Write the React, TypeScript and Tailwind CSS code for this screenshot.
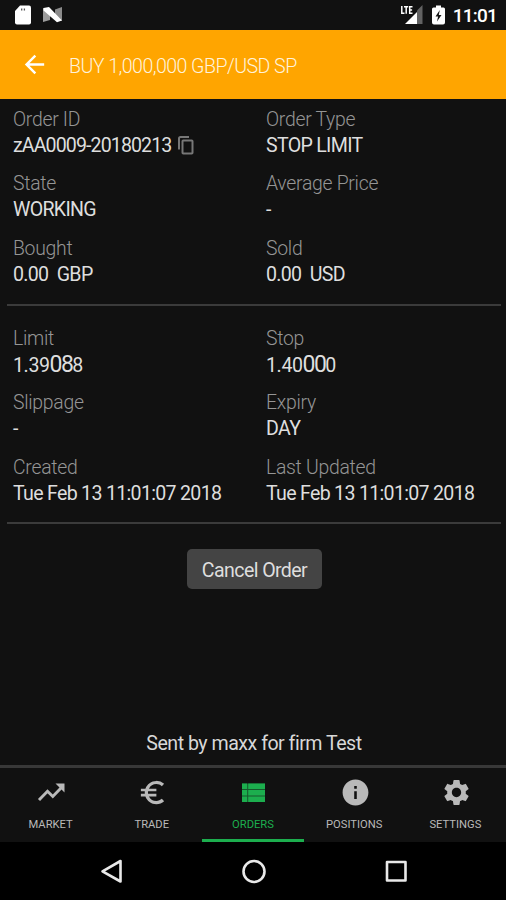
import type { ReactNode } from 'react';
import { MdArrowBack, MdEuroSymbol, MdInfo, MdSettings } from 'react-icons/md';

function TrendIcon({ size }: { size: number }) {
  return (
    <svg width={size} height={size} viewBox="0 0 31 31" fill="none">
      <path d="M3 23l8.500-8.800 5.300 5.300L25.500 10.500" stroke="currentColor" strokeWidth="2.900" />
      <path d="M19.500 6.500H28.500V15.500z" fill="currentColor" />
    </svg>
  );
}

function OrdersIcon({ size }: { size: number }) {
  return (
    <svg width={size} height={size} viewBox="0 0 31 31" fill="currentColor">
      <path d="M4 6.500h23V25H4z" opacity="0.45" />
      <path d="M4 6.500h5.200v5.600H4zM4 13.100h5.200v5.300H4zM4 19.400h5.200V25H4z" />
      <path d="M10.200 6.500H27v5.600H10.200zM10.200 13.100H27v5.300H10.200zM10.200 19.400H27V25H10.200z" />
    </svg>
  );
}

const tabs = [
  { label: 'MARKET', icon: TrendIcon },
  { label: 'TRADE', icon: MdEuroSymbol },
  { label: 'ORDERS', icon: OrdersIcon, active: true },
  { label: 'POSITIONS', icon: MdInfo },
  { label: 'SETTINGS', icon: MdSettings },
];

function StatusBar() {
  return (
    <div className="flex h-[30px] shrink-0 items-center pl-[14px] pr-[9px]">
      <svg width="18" height="20" viewBox="0 0 18 20">
        <path d="M6 .5h9a2 2 0 0 1 2 2v15a2 2 0 0 1-2 2H3a2 2 0 0 1-2-2V6z" fill="#fff" />
        <path d="M7.700 3.500v2M10.400 3.500v2" stroke="#555" strokeWidth="1.300" />
      </svg>
      <svg className="ml-[10px]" width="21" height="18" viewBox="0 0 21 18">
        <path d="M1 2v14l7-2V5z" fill="#9b9b9b" />
        <path d="M20 1v14l-7-4V3.500z" fill="#8b8b8b" />
        <path d="M1.500 2 7 1l13 13.500-5 1.800L1.500 4.500z" fill="#fff" />
      </svg>
      <div className="ml-auto flex items-center">
        <svg width="24" height="20" viewBox="0 0 24 20">
          <path d="M17 5.500 22.500 0v19H17z" fill="#626262" />
          <path d="M17 7v12H5z" fill="#fff" />
          <path
            d="M1.800 1v7.200h2.700M4 1.800h4.200M6.200 1.800v7M12.500 1.800H9.700v6.400h2.800M9.500 5h2.600"
            fill="none"
            stroke="#fff"
            strokeWidth="1.500"
          />
        </svg>
        <svg className="ml-[8px]" width="13" height="20" viewBox="0 0 13 20">
          <path d="M4 .5h5v2h2.500q1.500 0 1.500 1.500v13.500q0 2-2 2H2q-2 0-2-2V4q0-1.500 1.500-1.500H4z" fill="#fff" />
          <path d="M7.800 5 3.500 11.500h2.600L5 16.500l4.500-6.400H6.800z" fill="#151515" />
        </svg>
        <span className="mt-[1px] ml-[8px] text-[19px] leading-none font-medium tracking-[-0.8px] text-white">11:01</span>
      </div>
    </div>
  );
}

function CopyIcon() {
  return (
    <svg className="-mt-[2px] ml-[6px]" width="18" height="20" viewBox="0 0 18 20" fill="none" stroke="#777777" strokeWidth="2">
      <path d="M2 14.500V3.500q0-1.500 1.500-1.500h8.500" />
      <rect x="5.500" y="5.500" width="10" height="13" rx="0.800" />
    </svg>
  );
}

function Field({ label, children }: { label: string; children: ReactNode }) {
  return (
    <div className="h-[64.3px] whitespace-pre">
      <div className="text-[19.4px] leading-[26px] font-light tracking-[-0.28px] text-[#959595]">{label}</div>
      <div className="flex items-center text-[19.6px] leading-[25px] tracking-[-0.7px] text-[#dedede]">{children}</div>
    </div>
  );
}

// digits shown larger than the rest of the price
function Price({ start, pips, end }: { start: string; pips: string; end: string }) {
  return (
    <span className="tracking-[-0.4px]">
      {start}
      <span className="text-[23px] tracking-[-1.6px]">{pips}</span>
      {end}
    </span>
  );
}

export default function App() {
  return (
    <div className="flex h-[900px] w-[506px] flex-col overflow-hidden bg-[#111111] font-['Roboto',sans-serif]">
      <StatusBar />
      <header className="flex h-[69px] shrink-0 items-center bg-[#ffa500] pl-[20px]">
        <MdArrowBack size={29} className="text-white" />
        <h1 className="mt-[4px] ml-[20px] text-[19.6px] font-light tracking-[-0.55px] text-[#fff3dc]">
          BUY 1,000,000 GBP/USD SP
        </h1>
      </header>

      <main className="flex flex-1 flex-col pr-[5px] pl-[7px]">
        <section className="grid h-[205px] grid-cols-[253px_1fr] content-start pt-[8px] pl-[6px]">
          <Field label="Order ID">
            <span className="tracking-[-0.9px]">zAA0009-20180213</span>
            <CopyIcon />
          </Field>
          <Field label="Order Type">STOP LIMIT</Field>
          <Field label="State">WORKING</Field>
          <Field label="Average Price">-</Field>
          <Field label="Bought">{'0.00  GBP'}</Field>
          <Field label="Sold">{'0.00  USD'}</Field>
        </section>
        <hr className="h-[2px] border-0 bg-[#3b3b3b]" />
        <section className="grid h-[216px] grid-cols-[253px_1fr] content-start pt-[20px] pl-[6px]">
          <Field label="Limit">
            <Price start="1.39" pips="08" end="8" />
          </Field>
          <Field label="Stop">
            <Price start="1.40" pips="00" end="0" />
          </Field>
          <Field label="Slippage">-</Field>
          <Field label="Expiry">DAY</Field>
          <Field label="Created">Tue Feb 13 11:01:07 2018</Field>
          <Field label="Last Updated">Tue Feb 13 11:01:07 2018</Field>
        </section>
        <hr className="h-[2px] border-0 bg-[#3b3b3b]" />
        <button className="mr-[179px] ml-[180px] mt-[25px] h-[40px] rounded-[5px] bg-[#444444] pt-[3px] text-[19.6px] tracking-[-0.6px] text-[#dedede]">
          Cancel Order
        </button>
        <p className="mt-auto mb-[8px] text-center text-[19.6px] leading-[26px] tracking-[-0.5px] text-[#d8d8d8]">
          Sent by maxx for firm Test
        </p>
      </main>

      <nav className="grid h-[77px] shrink-0 grid-cols-5 border-t-[3px] border-[#383838]">
        {tabs.map(({ label, icon: Icon, active }) => (
          <a
            key={label}
            className={`flex flex-col items-center border-b-[3px] pt-[9px] ${
              active ? 'border-[#1cae4e] text-[#1cae4e]' : 'border-transparent text-[#b9b9b9]'
            }`}
          >
            <span className="pl-[2px]">
              <Icon size={31} />
            </span>
            <span className="mt-[9px] text-[11.2px] leading-[16px]">{label}</span>
          </a>
        ))}
      </nav>

      <div className="flex h-[58px] shrink-0 items-center bg-black pl-[99px]">
        <svg width="310" height="28" viewBox="0 0 310 28" fill="none" stroke="#e9e9e9" strokeWidth="2.600" strokeLinejoin="round">
          <path d="M21.500 4v20.500L3.500 14.300z" />
          <circle cx="155" cy="14.500" r="10.500" />
          <rect x="288" y="5" width="18.500" height="18.500" />
        </svg>
      </div>
    </div>
  );
}
